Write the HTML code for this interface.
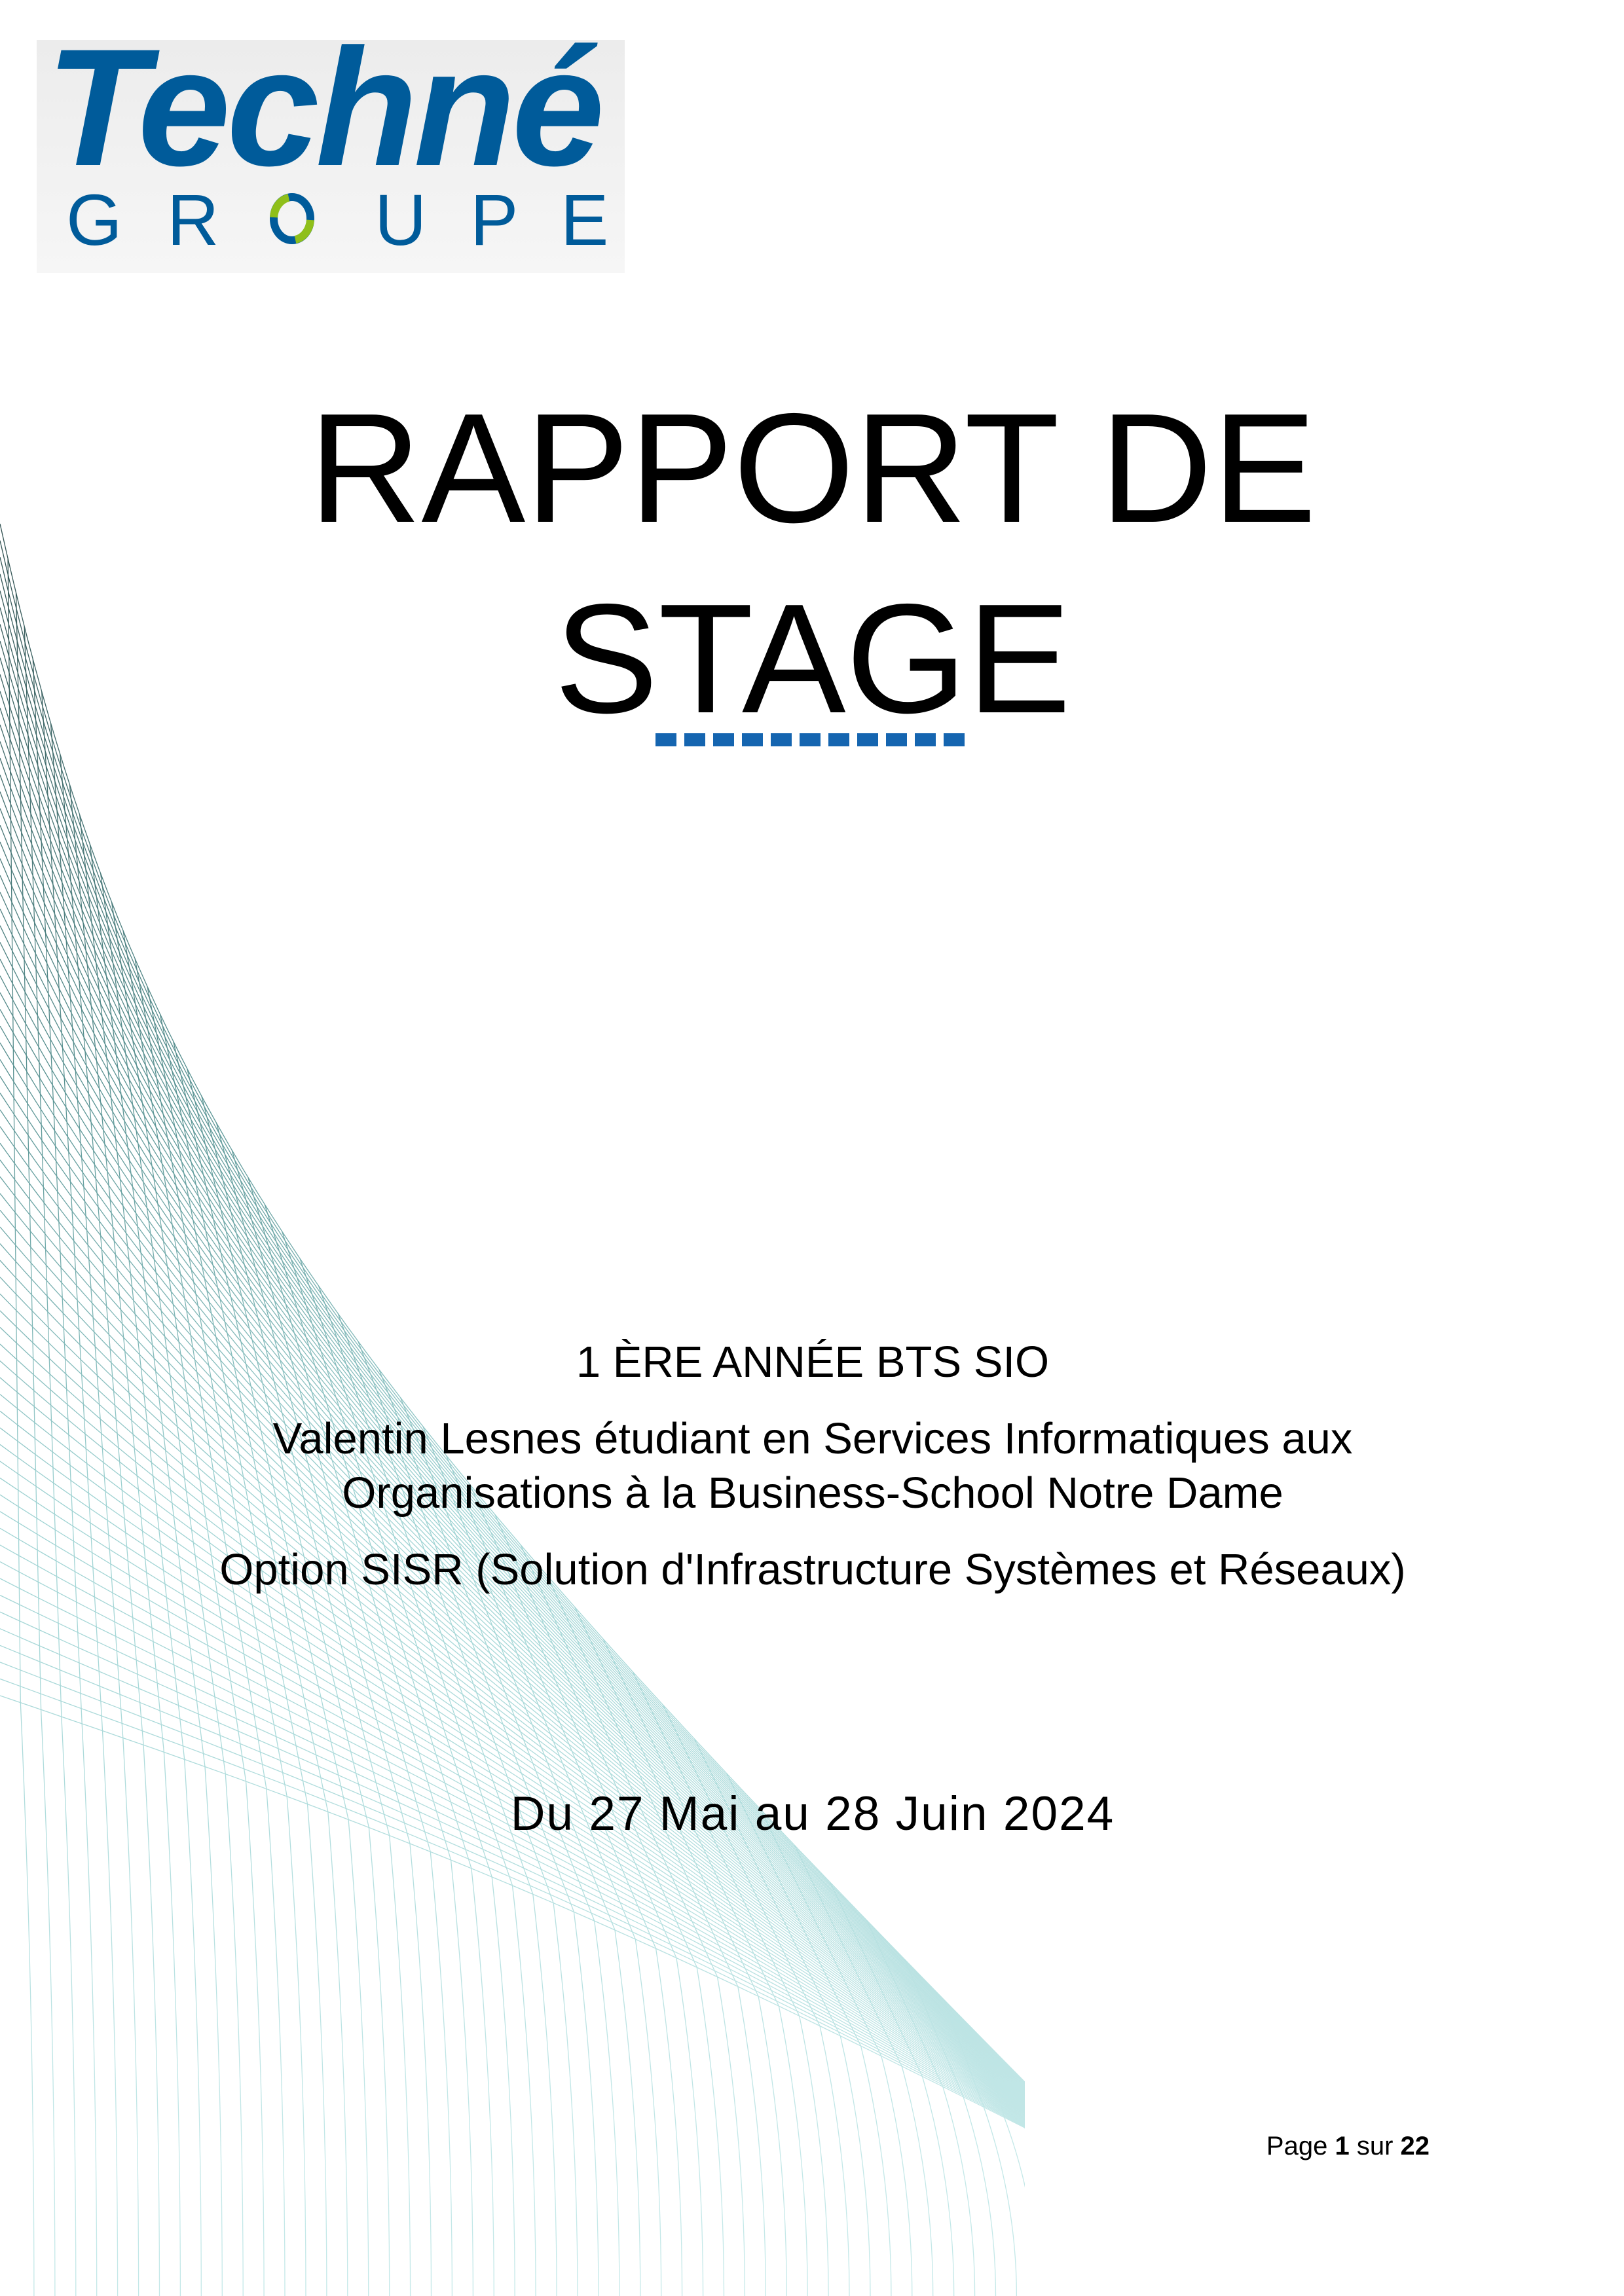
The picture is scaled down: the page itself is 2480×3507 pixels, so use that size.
<!DOCTYPE html>
<html><head><meta charset="utf-8">
<style>
html,body{margin:0;padding:0;background:#fff;}
body{width:2480px;height:3507px;position:relative;overflow:hidden;font-family:"Liberation Sans",sans-serif;color:#000;}
.c{position:absolute;left:0;width:2482px;text-align:center;white-space:nowrap;}
.abs{position:absolute;white-space:nowrap;}
</style></head><body>
<svg id="mesh" width="2480" height="3507" style="position:absolute;left:0;top:0">
<defs>
<linearGradient id="g" gradientUnits="userSpaceOnUse" x1="0" y1="800" x2="0" y2="3300">
<stop offset="0" stop-color="#2f4f4f"/>
<stop offset="0.35" stop-color="#5a9494"/>
<stop offset="0.6" stop-color="#9fd3d3"/>
<stop offset="1" stop-color="#c4e8e8"/>
</linearGradient>
<clipPath id="cp"><rect x="0" y="0" width="1565" height="3507"/></clipPath>
</defs>
<g id="lines" clip-path="url(#cp)" fill="none" stroke="url(#g)" stroke-width="1.3"></g>
</svg>
<script>
(function(){
 function T(s){var a=1-s;return [3*a*a*s*200+3*a*s*s*500+s*s*s*1565, a*a*a*800+3*a*a*s*1700+3*a*s*s*2100+s*s*s*3180];}
 function B(s){return [s*1565, 2590+s*660 - Math.sin(Math.PI*s)*40];}
 var g=document.getElementById('lines'),h='';
 var N=70;
 for(var i=0;i<=N;i++){var k=i/N;var d='';
  for(var j=0;j<=60;j++){var s=j/60;var t=T(s),b=B(s);var x=t[0]*(1-k)+b[0]*k,y=t[1]*(1-k)+b[1]*k;d+=(j?'L':'M')+x.toFixed(1)+','+y.toFixed(1);}
  h+='<path d="'+d+'"/>';}
 var M=50;
 for(var j=1;j<=M;j++){var s=j/M;var t=T(s),b=B(s);var bx=s*1565*1.02+20;
  var d='M'+t[0].toFixed(1)+','+t[1].toFixed(1)+'L'+b[0].toFixed(1)+','+b[1].toFixed(1)+'Q'+(bx).toFixed(1)+','+((b[1]+3507)/2).toFixed(1)+' '+bx.toFixed(1)+',3507';
  h+='<path d="'+d+'"/>';}
 g.innerHTML=h;
})();
</script>

<div class="abs" style="left:56px;top:61px;width:898px;height:356px;background:linear-gradient(#ececec,#f6f6f6);"></div>
<div class="abs" style="left:70px;top:40px;font-size:255px;font-weight:bold;font-style:italic;color:#005b9a;letter-spacing:-6px;line-height:250px;">Techné</div>
<div class="abs" style="left:101px;top:282px;font-size:110px;color:#005b9a;line-height:110px;">G</div>
<div class="abs" style="left:255px;top:282px;font-size:110px;color:#005b9a;line-height:110px;">R</div>
<svg class="abs" style="left:405px;top:292px" width="82" height="84" viewBox="0 0 82 84">
<ellipse cx="41" cy="42" rx="28" ry="33" fill="none" stroke="#005b9a" stroke-width="12"/>
<path d="M13,40 A28,33 0 0 1 36,10" fill="none" stroke="#8fbf1a" stroke-width="12"/>
<path d="M69,44 A28,33 0 0 1 46,74" fill="none" stroke="#8fbf1a" stroke-width="12"/>
</svg>
<div class="abs" style="left:572px;top:282px;font-size:110px;color:#005b9a;line-height:110px;">U</div>
<div class="abs" style="left:718px;top:282px;font-size:110px;color:#005b9a;line-height:110px;">P</div>
<div class="abs" style="left:856px;top:282px;font-size:110px;color:#005b9a;line-height:110px;">E</div>

<div class="c" style="top:597px;font-size:238px;line-height:238px;">RAPPORT DE</div>
<div class="c" style="top:888px;font-size:238px;line-height:238px;">STAGE</div>
<div class="abs" style="left:1001px;top:1120px;width:482px;height:20px;background:repeating-linear-gradient(90deg,#1565b0 0 32px,transparent 32px 44px);"></div>

<div class="c" style="top:2047px;font-size:67px;line-height:67px;">1 ÈRE ANNÉE BTS SIO</div>
<div class="c" style="top:2164px;font-size:67px;line-height:67px;">Valentin Lesnes étudiant en Services Informatiques aux</div>
<div class="c" style="top:2247px;font-size:67px;line-height:67px;">Organisations à la Business-School Notre Dame</div>
<div class="c" style="top:2364px;font-size:67px;line-height:67px;">Option SISR (Solution d'Infrastructure Systèmes et Réseaux)</div>

<div class="c" style="top:2734px;font-size:73px;line-height:73px;letter-spacing:2px;">Du 27 Mai au 28 Juin 2024</div>

<div class="abs" style="right:297px;top:3258px;font-size:40px;line-height:40px;">Page <b>1</b> sur <b>22</b></div>
</body></html>
